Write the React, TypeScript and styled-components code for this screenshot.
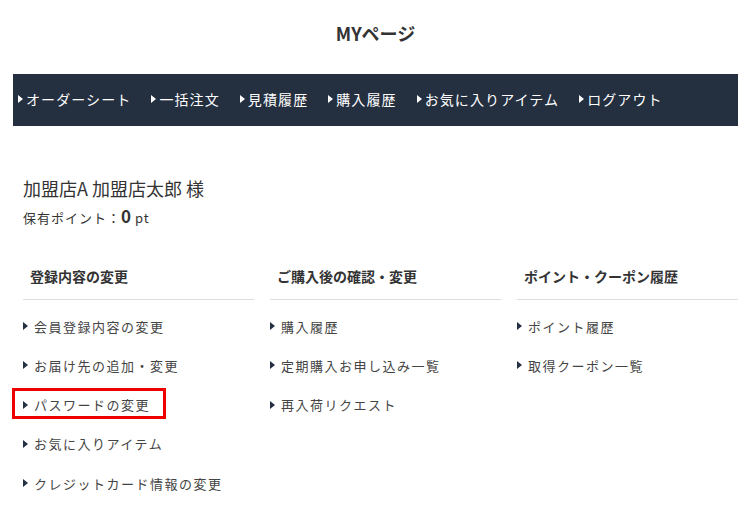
import { createGlobalStyle, styled } from "styled-components";

const GlobalStyle = createGlobalStyle`
  html, body {
    margin: 0;
    padding: 0;
    background: #fff;
    font-family: "Noto Sans CJK JP", "Noto Sans", sans-serif;
    color: #333;
  }
`;

const Page = styled.div`
  width: 756px;
  padding: 0 18px 0 13px;
  box-sizing: border-box;
`;

const Title = styled.h1`
  margin: 0;
  height: 74px;
  display: flex;
  align-items: center;
  justify-content: center;
  padding-bottom: 8px;
  box-sizing: border-box;
  font-size: 18px;
  font-weight: 700;
  color: #333;
`;

const NavBar = styled.nav`
  height: 52px;
  box-sizing: border-box;
  padding: 0 0 3px 5px;
  background: #242f3f;
  display: flex;
  align-items: center;
  gap: 20px;
`;

const Arrow = styled.span<{ $light?: boolean }>`
  display: inline-block;
  width: 0;
  height: 0;
  border-top: 4px solid transparent;
  border-bottom: 4px solid transparent;
  border-left: 5px solid ${(p) => (p.$light ? "#fff" : "#243042")};
  margin-right: ${(p) => (p.$light ? "3px" : "6px")};
`;

const NavItem = styled.a`
  display: inline-flex;
  align-items: center;
  color: #fff;
  font-size: 14px;
  font-weight: 400;
  letter-spacing: 1.1px;
  text-decoration: none;
  white-space: nowrap;
`;

const Content = styled.div`
  padding: 48px 0 0 10px;
`;

const UserName = styled.div`
  font-size: 18px;
  line-height: 28px;
  color: #333;
`;

const Points = styled.div`
  font-size: 13px;
  line-height: 28px;
  letter-spacing: 1px;
  color: #333;
  display: flex;
  align-items: baseline;

  strong {
    font-size: 17px;
    font-weight: 700;
    margin-right: 3px;
  }
`;

const Columns = styled.div`
  display: grid;
  grid-template-columns: 231px 231px 221px;
  column-gap: 16px;
  margin-top: 26px;
`;

const Heading = styled.h2`
  margin: 0;
  font-size: 14px;
  font-weight: 700;
  line-height: 20px;
  padding: 8px 0 13px 7px;
  border-bottom: 1px solid #ddd;
  color: #333;
`;

const List = styled.ul`
  list-style: none;
  margin: 0;
  padding: 16px 0 0;
  display: flex;
  flex-direction: column;
  gap: 19.3px;
`;

const Item = styled.li<{ $marked?: boolean }>`
  position: relative;
  display: flex;
  align-items: center;
  height: 20px;
  font-size: 13px;
  letter-spacing: 1.5px;
  color: #444;
  white-space: nowrap;

  ${(p) =>
    p.$marked &&
    `
    &::after {
      content: "";
      position: absolute;
      left: -11px;
      top: -7px;
      width: 154px;
      height: 31px;
      box-sizing: border-box;
      border: 3px solid #ee0000;
    }
  `}
`;

const navItems = ["オーダーシート", "一括注文", "見積履歴", "購入履歴", "お気に入りアイテム", "ログアウト"];

const columns = [
  {
    title: "登録内容の変更",
    items: ["会員登録内容の変更", "お届け先の追加・変更", "パスワードの変更", "お気に入りアイテム", "クレジットカード情報の変更"],
  },
  {
    title: "ご購入後の確認・変更",
    items: ["購入履歴", "定期購入お申し込み一覧", "再入荷リクエスト"],
  },
  {
    title: "ポイント・クーポン履歴",
    items: ["ポイント履歴", "取得クーポン一覧"],
  },
];

export default function App() {
  return (
    <Page>
      <GlobalStyle />
      <Title>MYページ</Title>
      <NavBar>
        {navItems.map((label) => (
          <NavItem key={label}>
            <Arrow $light />
            {label}
          </NavItem>
        ))}
      </NavBar>
      <Content>
        <UserName>加盟店A 加盟店太郎 様</UserName>
        <Points>
          保有ポイント：<strong>0</strong>pt
        </Points>
        <Columns>
          {columns.map((col) => (
            <div key={col.title}>
              <Heading>{col.title}</Heading>
              <List>
                {col.items.map((item) => (
                  <Item key={item} $marked={item === "パスワードの変更"}>
                    <Arrow />
                    {item}
                  </Item>
                ))}
              </List>
            </div>
          ))}
        </Columns>
      </Content>
    </Page>
  );
}
